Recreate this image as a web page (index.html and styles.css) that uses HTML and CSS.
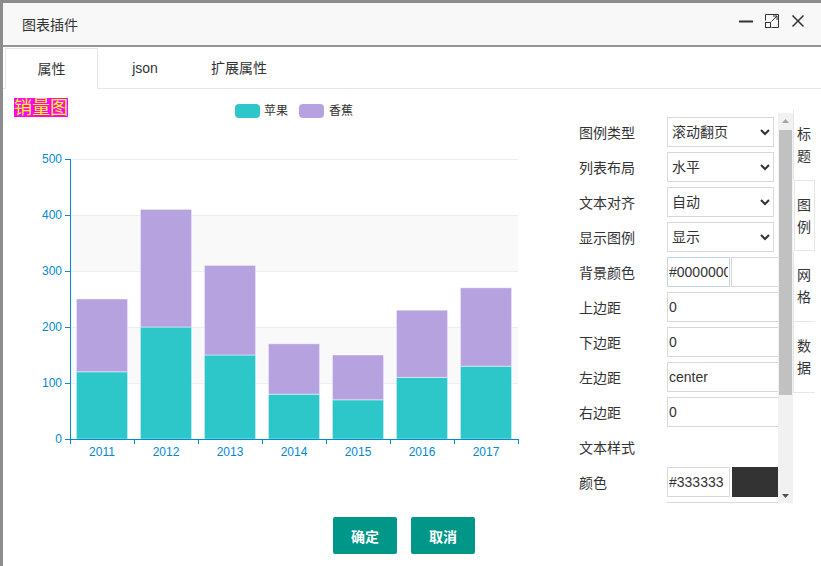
FILE: index.html
```html
<!DOCTYPE html>
<html lang="zh-CN">
<head>
<meta charset="utf-8">
<title>图表插件</title>
<link rel="stylesheet" href="styles.css">
</head>
<body>
<div class="screen">
  <div class="dialog">
    <div class="titlebar">
      <span class="title">图表插件</span>
      <div class="win-btns">
        <svg class="win-icon" width="14" height="14" viewBox="0 0 14 14"><path d="M0 7.5H14" stroke="#333" stroke-width="2"/></svg>
        <svg class="win-icon" width="14" height="14" viewBox="0 0 14 14" fill="none" stroke="#333" stroke-width="1"><path d="M0.5 6.5V0.5H13.5V13.5H6.5"/><rect x="0.5" y="8.5" width="5" height="5"/><path d="M6.5 7.5L12 2M8 2H12V6"/></svg>
        <svg class="win-icon" width="14" height="14" viewBox="0 0 14 14" fill="none" stroke="#333" stroke-width="1.5"><path d="M1.5 1.5L12.5 12.5M12.5 1.5L1.5 12.5"/></svg>
      </div>
    </div>
    <div class="tabs">
      <div class="tab active">属性</div>
      <div class="tab">json</div>
      <div class="tab">扩展属性</div>
    </div>
    <div class="main">
      <div class="chart">
        <svg width="567" height="420" viewBox="0 0 567 420" class="chart-svg">
          <g transform="translate(-3,-89)">
            <rect x="14" y="98" width="54" height="19" fill="#ff00ff"/>
            <text x="14" y="114" class="chart-title">销量图</text>
            <rect x="235" y="104" width="25" height="14" rx="4" fill="#2ec7c9"/>
            <text x="264" y="115" class="legend">苹果</text>
            <rect x="299" y="104" width="25" height="14" rx="4" fill="#b6a2de"/>
            <text x="329" y="115" class="legend">香蕉</text>

            <rect x="70" y="215" width="448" height="56" fill="#f9f9f9"/>
            <rect x="70" y="327" width="448" height="56" fill="#f9f9f9"/>
            <g stroke="#eeeeee" stroke-width="1">
              <path d="M70 159.5H518M70 215.5H518M70 271.5H518M70 327.5H518M70 383.5H518"/>
            </g>

            <g stroke="rgba(255,255,255,0.45)" stroke-width="1">
              <rect x="76.4" y="371.8" width="51.2" height="67.2" fill="#2ec7c9"/>
              <rect x="76.4" y="299" width="51.2" height="72.8" fill="#b6a2de"/>
              <rect x="140.4" y="327" width="51.2" height="112" fill="#2ec7c9"/>
              <rect x="140.4" y="209.4" width="51.2" height="117.6" fill="#b6a2de"/>
              <rect x="204.4" y="355" width="51.2" height="84" fill="#2ec7c9"/>
              <rect x="204.4" y="265.4" width="51.2" height="89.6" fill="#b6a2de"/>
              <rect x="268.4" y="394.2" width="51.2" height="44.8" fill="#2ec7c9"/>
              <rect x="268.4" y="343.8" width="51.2" height="50.4" fill="#b6a2de"/>
              <rect x="332.4" y="399.8" width="51.2" height="39.2" fill="#2ec7c9"/>
              <rect x="332.4" y="355" width="51.2" height="44.8" fill="#b6a2de"/>
              <rect x="396.4" y="377.4" width="51.2" height="61.6" fill="#2ec7c9"/>
              <rect x="396.4" y="310.2" width="51.2" height="67.2" fill="#b6a2de"/>
              <rect x="460.4" y="366.2" width="51.2" height="72.8" fill="#2ec7c9"/>
              <rect x="460.4" y="287.8" width="51.2" height="78.4" fill="#b6a2de"/>
            </g>

            <g stroke="#008acd" stroke-width="1" fill="none">
              <path d="M70.5 159V439.5"/>
              <path d="M65 159.5H70M65 215.5H70M65 271.5H70M65 327.5H70M65 383.5H70M65 439.5H70"/>
              <path d="M70 439.5H518.5"/>
              <path d="M70.5 439V444M134.5 439V444M198.5 439V444M262.5 439V444M326.5 439V444M390.5 439V444M454.5 439V444M518.5 439V444"/>
            </g>

            <g class="axis-label" text-anchor="end">
              <text x="62" y="163">500</text>
              <text x="62" y="219">400</text>
              <text x="62" y="275">300</text>
              <text x="62" y="331">200</text>
              <text x="62" y="387">100</text>
              <text x="62" y="443">0</text>
            </g>
            <g class="axis-label" text-anchor="middle">
              <text x="102" y="456">2011</text>
              <text x="166" y="456">2012</text>
              <text x="230" y="456">2013</text>
              <text x="294" y="456">2014</text>
              <text x="358" y="456">2015</text>
              <text x="422" y="456">2016</text>
              <text x="486" y="456">2017</text>
            </g>
          </g>
        </svg>
      </div>
      <div class="panel">
        <div class="scroll-box">
          <div class="form-view">
            <div class="row"><label class="lbl">图例类型</label><select class="sel"><option>滚动翻页</option></select></div>
            <div class="row"><label class="lbl">列表布局</label><select class="sel"><option>水平</option></select></div>
            <div class="row"><label class="lbl">文本对齐</label><select class="sel"><option>自动</option></select></div>
            <div class="row"><label class="lbl">显示图例</label><select class="sel"><option>显示</option></select></div>
            <div class="row"><label class="lbl">背景颜色</label><input class="inp color-inp focus" value="#0000000"><span class="swatch swatch-white"></span></div>
            <div class="row"><label class="lbl">上边距</label><input class="inp" value="0"></div>
            <div class="row"><label class="lbl">下边距</label><input class="inp" value="0"></div>
            <div class="row"><label class="lbl">左边距</label><input class="inp" value="center"></div>
            <div class="row"><label class="lbl">右边距</label><input class="inp" value="0"></div>
            <div class="row"><label class="lbl">文本样式</label></div>
            <div class="row"><label class="lbl">颜色</label><input class="inp color-inp" value="#333333"><span class="swatch swatch-dark"></span></div>
            <div class="row"><span class="lbl"></span><input class="inp"></div>
          </div>
          <div class="scrollbar">
            <div class="sb-btn"><svg width="7" height="4" viewBox="0 0 7 4"><path d="M0 4L3.5 0L7 4Z" fill="#a3a3a3"/></svg></div>
            <div class="sb-track"><div class="sb-thumb"></div></div>
            <div class="sb-btn"><svg width="7" height="4" viewBox="0 0 7 4"><path d="M0 0L3.5 4L7 0Z" fill="#505050"/></svg></div>
          </div>
        </div>
        <ul class="vtabs">
          <li class="vtab">标题</li>
          <li class="vtab active">图例</li>
          <li class="vtab">网格</li>
          <li class="vtab last">数据</li>
        </ul>
      </div>
    </div>
    <div class="actions">
      <button class="btn">确定</button>
      <button class="btn">取消</button>
    </div>
  </div>
</div>
</body>
</html>
```
FILE: styles.css
```css
* { box-sizing: border-box; }
html, body { margin: 0; padding: 0; }
body {
  font-family: "Liberation Sans", "Noto Sans CJK SC", sans-serif;
  color: #333;
  background: #8c8c8c;
}
.screen {
  width: 821px;
  height: 566px;
  overflow: hidden;
  background: #8c8c8c;
  padding: 3px 0 0 3px;
}
.dialog {
  width: 830px;
  height: 600px;
  background: #fff;
}
.titlebar {
  height: 44px;
  background: #f8f8f8;
  border-bottom: 2px solid #949494;
  display: flex;
  align-items: center;
  padding: 0 28px 0 19px;
}
.title {
  font-size: 14px;
  color: #333;
  margin-top: -1px;
}
.win-btns {
  margin-left: auto;
  display: flex;
  gap: 12px;
  align-items: center;
  margin-top: -6px;
}
.win-icon { display: block; }
.tabs {
  height: 42px;
  border-bottom: 1px solid #e6e6e6;
  display: flex;
  padding: 1px 0 0 2px;
}
.tab {
  width: 94px;
  height: 41px;
  line-height: 40px;
  text-align: center;
  font-size: 14px;
  color: #333;
}
.tab.active {
  width: 93px;
  border: 1px solid #e6e6e6;
  border-bottom: none;
  background: #fff;
  position: relative;
  z-index: 1;
}
.main {
  display: flex;
  height: 420px;
}
.chart {
  width: 567px;
  flex: none;
}
.chart-svg { display: block; }
.chart-title {
  font-size: 18px;
  fill: #ffff00;
  font-family: "Noto Sans CJK SC", sans-serif;
}
.legend {
  font-size: 12px;
  fill: #333;
  font-family: "Noto Sans CJK SC", sans-serif;
}
.axis-label text {
  font-size: 12px;
  fill: #008acd;
  font-family: "Liberation Sans", sans-serif;
}
.panel {
  display: flex;
  align-items: flex-start;
  padding-top: 21px;
}
.scroll-box {
  display: flex;
  width: 223px;
  height: 390px;
  margin-top: 3px;
}
.form-view {
  width: 208px;
  height: 390px;
  overflow: hidden;
  padding-top: 4px;
}
.scrollbar {
  width: 15px;
  height: 390px;
  background: #f1f1f1;
  display: flex;
  flex-direction: column;
}
.sb-btn {
  height: 15px;
  flex: none;
  display: flex;
  align-items: center;
  justify-content: center;
}
.sb-btn svg { display: block; }
.sb-track {
  flex: 1;
  padding: 2px 1px 0 1px;
}
.sb-thumb {
  height: 265px;
  background: #c1c1c1;
}
.row {
  display: flex;
  align-items: center;
  height: 30px;
  margin-bottom: 5px;
  padding-left: 9px;
  white-space: nowrap;
}
.lbl {
  width: 88px;
  flex: none;
  font-size: 14px;
  color: #333;
}
.sel {
  width: 107px;
  height: 30px;
  flex: none;
  border: 1px solid #d9d9d9;
  border-radius: 0;
  background: #fff;
  font-size: 14px;
  color: #333;
  font-family: "Liberation Sans", "Noto Sans CJK SC", sans-serif;
  padding-left: 0;
}
.inp {
  width: 130px;
  height: 30px;
  flex: none;
  border: 1px solid #d9d9d9;
  padding: 0 1px;
  font-size: 14px;
  color: #333;
  font-family: "Liberation Sans", "Noto Sans CJK SC", sans-serif;
  outline: none;
}
.color-inp { width: 63px; }
.color-inp.focus { border-color: #c3d6e6; }
.swatch {
  width: 50px;
  height: 30px;
  flex: none;
  margin-left: 1px;
  border: 1px solid #d9d9d9;
}
.swatch-white { background: #fff; }
.swatch-dark { background: #333; border-color: #333; margin-left: 2px; }
.vtabs {
  list-style: none;
  margin: 0;
  padding: 0;
  width: 22px;
}
.vtab {
  width: 22px;
  height: 70px;
  border-left: 1px solid #e6e6e6;
  padding: 12px 0 0 3px;
  font-size: 14px;
  line-height: 22px;
  color: #333;
  font-family: "Noto Sans CJK SC", sans-serif;
  word-break: break-all;
}
.vtab.active {
  height: 71px;
  border: 1px solid #e6e6e6;
  margin-left: 1px;
  width: 21px;
  padding-top: 12px;
  padding-left: 2px;
}
.vtab.active + .vtab { border-bottom: 1px solid #e6e6e6; height: 71px; }
.vtab.last { border-bottom: 1px solid #e6e6e6; height: 71px; }
.actions {
  display: flex;
  gap: 14px;
  padding: 8px 0 0 330px;
}
.btn {
  width: 64px;
  height: 37px;
  border: none;
  border-radius: 2px;
  background: #009688;
  color: #fff;
  font-size: 14px;
  font-weight: bold;
  font-family: "Noto Sans CJK SC", sans-serif;
  padding: 0;
}
```
